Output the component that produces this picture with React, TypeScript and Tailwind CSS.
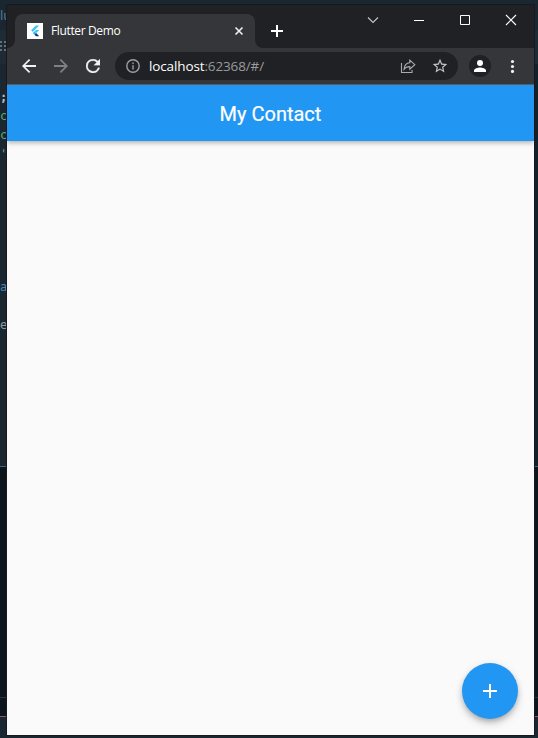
import React from "react";

// The code editor that shows along the edges behind the browser window.
function EditorBackdrop() {
  return (
    <div className="absolute inset-0 flex flex-col bg-[#1a2730] font-['DejaVu_Sans_Mono',monospace] text-[12px] leading-[19px] whitespace-pre">
      <div className="h-[30px] pt-[6px] font-['Open_Sans',sans-serif] text-[13px] text-[#547d95]">lu</div>
      <div className="flex h-[34px] bg-[#1e2b34] pt-[11px]">
        <svg width="7" height="11" fill="#61717a">
          <path d="M0 0h2v2H0zM4 0h2v2H4zM0 4h2v2H0zM4 4h2v2H4zM0 8h2v2H0zM4 8h2v2H4z" />
        </svg>
      </div>
      <div className="flex h-[402px] justify-between">
        <div className="flex flex-col pt-6 text-[#5ba979]">
          <span className="font-bold text-[#b6bec2]">;</span>
          <span>c</span>
          <span>c</span>
          <span>'</span>
          <span className="pt-[114px] text-[#4589b5]">a</span>
          <span className="pt-[19px] text-[#8d999f]">e</span>
        </div>
        <div className="w-1 bg-[#12202a]" />
      </div>
      <div className="h-px bg-[#3f667c]" />
      <div className="h-[230px] bg-[#0b151b]" />
      <div className="h-px bg-[#26343d]" />
      <div className="h-[18px] bg-[#0b151b]" />
      <div className="h-px bg-[#9a5268]" />
    </div>
  );
}

function FlutterMark() {
  return (
    <svg width="16" height="16" viewBox="0 0 16 16" className="bg-white">
      <path d="M8.800 2.500h3.400L5.800 8.900 4.100 7.200z" fill="#42c5f4" />
      <path d="M9 7h3.300L9.200 10.100 7.500 8.400z" fill="#42c5f4" />
      <path d="M5.800 10.100l1.700-1.700 1.700 1.700-1.700 1.700z" fill="#29b6f6" />
      <path d="M9.200 10.100l3 3.100H9l-1.500-1.400z" fill="#0b3f85" />
    </svg>
  );
}

function TabStrip() {
  return (
    <div className="flex h-[43px] bg-[#202124] pl-2">
      <div className="relative mt-[9px] flex h-[34px] w-[240px] items-center rounded-t-lg bg-[#35363a] pr-[11px] pl-3">
        <FlutterMark />
        <span className="ml-2 flex-1 text-[12px] tracking-[-0.36px] whitespace-nowrap text-white">Flutter Demo</span>
        <svg width="10" height="10" viewBox="0 0 10 10" fill="none" stroke="#f1f1f2" strokeWidth="1.600">
          <path d="M1.500 1.500l7 7M8.500 1.500l-7 7" />
        </svg>
        <svg className="absolute bottom-0 -left-2" width="8" height="8" fill="#35363a">
          <path d="M8 0v8H0a8 8 0 0 0 8-8z" />
        </svg>
        <svg className="absolute -right-2 bottom-0" width="8" height="8" fill="#35363a">
          <path d="M0 0v8h8a8 8 0 0 1-8-8z" />
        </svg>
      </div>
      <svg className="mt-5 ml-4" width="12" height="12" fill="#fff">
        <path d="M5 0h2v5h5v2H7v5H5V7H0V5h5z" />
      </svg>
      <div className="ml-auto flex h-[30px] items-center text-white">
        <svg width="46" height="30" fill="none" stroke="#c5c6c8" strokeWidth="1.1">
          <path d="M18 12.5l5 5 5-5" />
        </svg>
        <svg width="46" height="30" fill="#fff">
          <path d="M18 15h10v1H18z" />
        </svg>
        <svg width="46" height="30" fill="none" stroke="#fff">
          <path d="M18.500 10.500h9v9h-9z" />
        </svg>
        <svg width="46" height="30" fill="none" stroke="#fff" strokeWidth="1.1">
          <path d="M18 10l10 10M28 10L18 20" />
        </svg>
      </div>
    </div>
  );
}

function Toolbar() {
  return (
    <div className="flex h-9 items-center bg-[#35363a] pl-[15px]">
      <svg width="14" height="14" viewBox="4 4 16 16" fill="#f1f1f2">
        <path d="M20 10.850H7.830l5.590-5.440L12 4l-8 8 8 8 1.410-1.410L7.830 13.150H20v-2.300z" />
      </svg>
      <svg className="ml-[18px]" width="14" height="14" viewBox="4 4 16 16" fill="#808184">
        <path d="M12 4l-1.410 1.410L16.170 10.850H4v2.300h12.170l-5.580 5.440L12 20l8-8z" />
      </svg>
      <svg className="ml-[18px]" width="14" height="14" viewBox="4 4 16 16" fill="#f1f1f2" stroke="#f1f1f2" strokeWidth="0.300">
        <path d="M17.650 6.350A7.960 7.960 0 0 0 12 4a8 8 0 1 0 7.730 10h-2.080A6 6 0 1 1 12 6c1.660 0 3.140.69 4.220 1.780L13 11h7V4l-2.350 2.350z" />
      </svg>
      <div className="ml-[15px] flex h-7 w-[343px] items-center rounded-full bg-[#202124] pr-[10px] pl-[11px]">
        <svg width="14" height="14" viewBox="0 0 14 14" fill="none" stroke="#9aa0a6" strokeWidth="1.400">
          <circle cx="7" cy="7" r="6.200" />
          <path d="M7 6.200v4.200M7 3.400v1.500" />
        </svg>
        <span className="ml-[9px] flex-1 text-[13.500px] tracking-[-0.13px] whitespace-nowrap text-white">
          localhost<span className="text-[#9a9b9e]">:62368/#/</span>
        </span>
        <svg width="16" height="16" viewBox="0 0 16 16" fill="none" stroke="#aaabad" strokeWidth="1.100">
          <path d="M1.500 5v9.500H12V12" />
          <path d="M9.800 2.200l5 4.500-5 4.500V8.600c-2.700 0-4.600.8-5.700 2.500.2-3.500 2.200-6 5.700-6.300z" />
        </svg>
        <svg className="ml-4" width="16" height="16" viewBox="1 1 22 22" fill="#c3c4c6">
          <path d="M22 9.240l-7.190-.62L12 2 9.190 8.630 2 9.240l5.460 4.730L5.820 21 12 17.270 18.180 21l-1.630-7.030L22 9.240zM12 15.400l-3.760 2.270 1-4.280-3.320-2.880 4.380-.38L12 6.100l1.710 4.040 4.380.38-3.320 2.880 1 4.280L12 15.400z" />
        </svg>
      </div>
      <div className="ml-[11px] flex size-[22px] items-center justify-center rounded-full bg-[#202124]">
        <svg width="12" height="12" viewBox="0 0 12 12" fill="#fff">
          <circle cx="6" cy="3" r="3" />
          <path d="M0 12v-1.500C0 8.500 4 7.500 6 7.500s6 1 6 3V12z" />
        </svg>
      </div>
      <svg className="ml-[19px]" width="5" height="14" fill="#f1f1f2">
        <circle cx="2.500" cy="2.500" r="1.600" />
        <circle cx="2.500" cy="7.500" r="1.600" />
        <circle cx="2.500" cy="12.400" r="1.600" />
      </svg>
    </div>
  );
}

export default function App() {
  return (
    <div className="relative h-[738px] w-[538px] overflow-hidden">
      <EditorBackdrop />
      <div className="relative h-full pt-[5px] pr-1 pb-[3px] pl-[7px]">
        <main className="relative flex h-full flex-col bg-[#fafafa] font-['Open_Sans','Noto_Sans',sans-serif] shadow-[0_0_0_1px_#17191c]">
          <TabStrip />
          <Toolbar />
          <div className="h-px bg-[#5b5c60]" />
          <header className="flex h-14 items-center justify-center bg-[#2196f3] pt-px shadow-[0_2px_4px_-1px_rgba(0,0,0,0.2),0_3px_5px_rgba(0,0,0,0.13)] [clip-path:inset(0_0_-20px_0)]">
            <h1 className="font-[Roboto,sans-serif] text-xl font-normal text-white [-webkit-text-stroke:0.200px_white]">My Contact</h1>
          </header>
          <button
            aria-label="Add contact"
            className="absolute right-4 bottom-4 flex size-14 items-center justify-center rounded-full bg-[#2196f3] shadow-[0_3px_5px_-1px_rgba(0,0,0,0.2),0_5px_9px_rgba(0,0,0,0.14),0_1px_10px_rgba(0,0,0,0.06)]"
          >
            <svg width="14" height="14" fill="#fff">
              <path d="M6 0h2v6h6v2H8v6H6V8H0V6h6z" />
            </svg>
          </button>
        </main>
      </div>
    </div>
  );
}
